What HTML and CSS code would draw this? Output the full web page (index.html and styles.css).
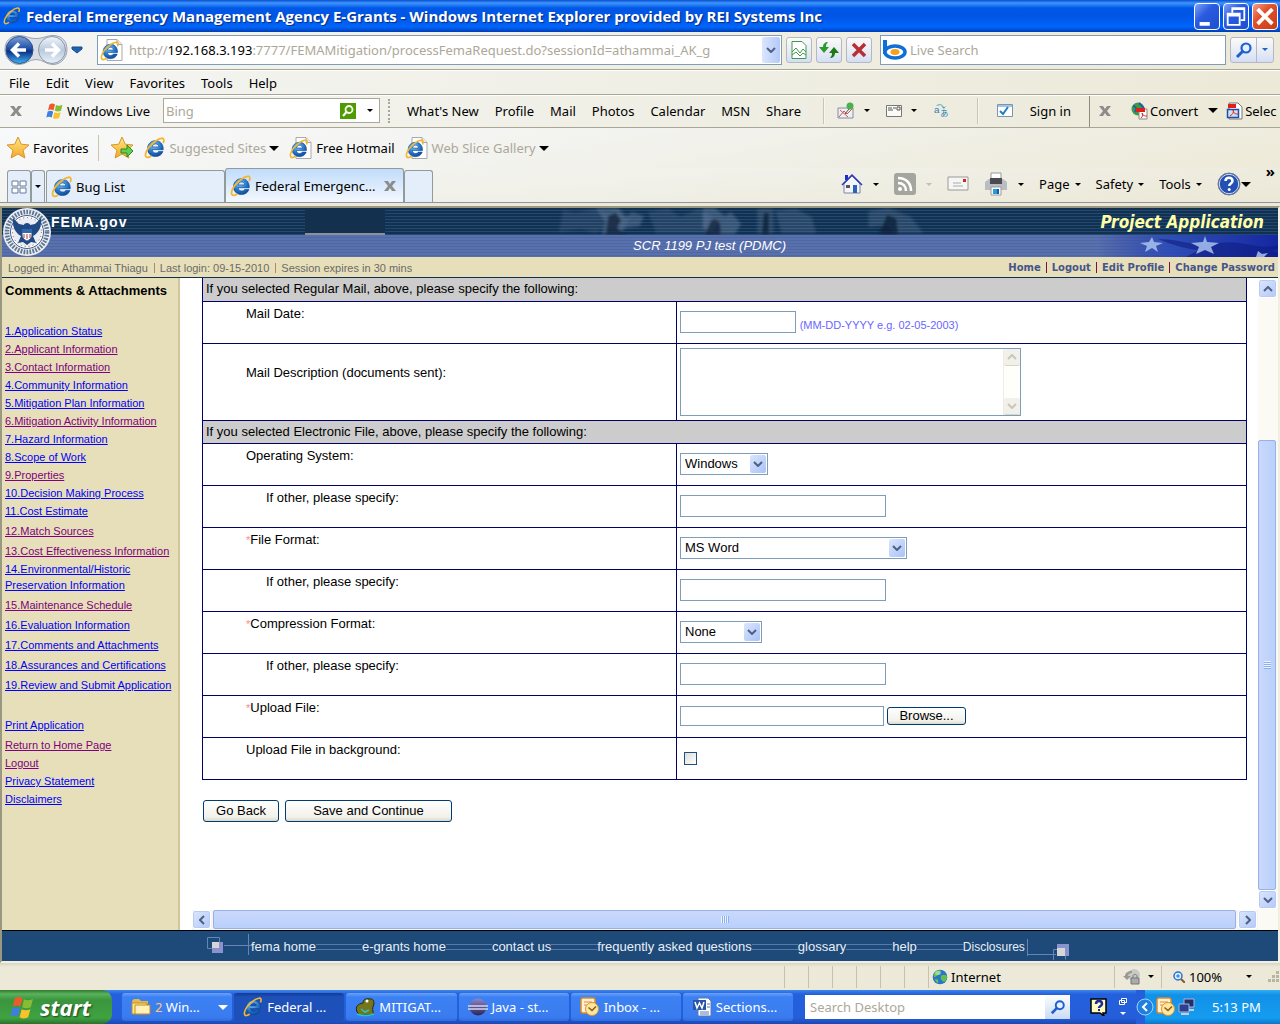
FILE: index.html
```html
<!DOCTYPE html>
<html lang="en">
<head>
<meta charset="utf-8">
<title>Federal Emergency Management Agency E-Grants</title>
<link rel="stylesheet" href="styles.css">
</head>
<body>
<svg class="defs" aria-hidden="true">
  <defs>
    <radialGradient id="gBlue" cx="0.4" cy="0.3" r="0.8"><stop offset="0" stop-color="#7cc8f8"/><stop offset="0.6" stop-color="#1f6fc4"/><stop offset="1" stop-color="#0c3f8c"/></radialGradient>
    <linearGradient id="gBack" x2="0" y2="1"><stop offset="0" stop-color="#7d9ed6"/><stop offset="0.45" stop-color="#1f4fa6"/><stop offset="0.55" stop-color="#0b2f86"/><stop offset="1" stop-color="#3fb4f2"/></linearGradient>
    <linearGradient id="gFwd" x2="0" y2="1"><stop offset="0" stop-color="#f2f6fb"/><stop offset="0.5" stop-color="#b9c9dc"/><stop offset="1" stop-color="#e9f2fa"/></linearGradient>
    <linearGradient id="gStar" x2="0" y2="1"><stop offset="0" stop-color="#ffe98a"/><stop offset="1" stop-color="#f5a623"/></linearGradient>
    <linearGradient id="gPurple" x2="0" y2="1"><stop offset="0" stop-color="#8d86c9"/><stop offset="1" stop-color="#2b2357"/></linearGradient>
    <linearGradient id="gFade"><stop offset="0" stop-color="#1c2fa8" stop-opacity="0"/><stop offset="0.4" stop-color="#2546b8" stop-opacity="0.8"/><stop offset="1" stop-color="#1526a0"/></linearGradient>
    <filter id="soft"><feGaussianBlur stdDeviation="1.500"/></filter>
  </defs>
  <symbol id="ie" viewBox="0 0 20 20">
    <path d="M17.500 11.500H7.400c.2 2 1.500 3 3.200 3 1.300 0 2.200-.5 2.700-1.400h3.900c-1 3-3.500 4.600-6.700 4.600-4.300 0-7.300-2.900-7.300-7.100S6.300 3.300 10.500 3.300c4.500 0 7.200 3.200 7 8.200zM7.500 9h6c-.2-1.700-1.300-2.700-2.900-2.700-1.700 0-2.800 1-3.100 2.700z" fill="url(#gBlue)" stroke="#0d4a94" stroke-width=".6"/>
    <path d="M17.500 5.500C18.700 2.500 18 .8 15.800 1.200 11.500 1.800 4.500 8 2.200 13c-1.500 3.500-.9 6 1.600 5.500 1-.2 2-.8 2.900-1.500" fill="none" stroke="#f2b632" stroke-width="1.600"/>
  </symbol>
  <symbol id="iepage" viewBox="0 0 24 24">
    <path d="M7 1.500h10l5 5v16H7z" fill="#fff" stroke="#a9a9a9"/><path d="M17 1.500v5h5" fill="#eee" stroke="#a9a9a9"/>
    <use href="#ie" x="0" y="3" width="20" height="20"/>
  </symbol>
  <symbol id="caret" viewBox="0 0 8 4"><path d="M0 0h8L4 4z" fill="currentColor"/></symbol>
  <symbol id="cross" viewBox="0 0 12 12"><path d="M0 1h4l2 3 2-3h4L8 6l4 5H8L6 8l-2 3H0l4-5z" fill="#8c8c8c"/></symbol>
  <symbol id="flag" viewBox="0 0 18 18">
    <path d="M3.500 2.500C5.500 1 7 1.200 9 2.400L7.500 8.500C5.500 7.300 4 7.300 2 8.300z" fill="#ee5a2a"/><path d="M10 3c2 1 4 1 6.500-.2L15 8.800c-2.300 1-4 1-6.200 0z" fill="#86bd35"/>
    <path d="M1.700 9.500c2-1 3.600-.9 5.500.2L5.700 15.500C3.700 14.500 2.200 14.500.3 15.400z" fill="#3d7fe0"/><path d="M8.400 10.200c2 1 4 1 6.300 0l-1.600 5.900c-2.200 1-4 1-6.200-.1z" fill="#f8c22c"/>
  </symbol>
  <symbol id="star" viewBox="0 0 24 24"><path d="M12 1l3.200 7.200 7.800.8-5.900 5.200 1.800 7.800L12 18l-6.900 4 1.800-7.800L1 9l7.800-.8z" fill="url(#gStar)" stroke="#d8962a"/></symbol>
  <symbol id="glass" viewBox="0 0 18 18"><circle cx="11" cy="7" r="4.500" fill="#e3f0ff" stroke="currentColor" stroke-width="2.200"/><path d="M8 10l-6 6" stroke="currentColor" stroke-width="3"/></symbol>
  <symbol id="up" viewBox="0 0 10 6"><path d="M1 5l4-4 4 4" fill="none" stroke="currentColor" stroke-width="2"/></symbol>
  <symbol id="down" viewBox="0 0 10 6"><path d="M1 1l4 4 4-4" fill="none" stroke="currentColor" stroke-width="2"/></symbol>
  <symbol id="outlook" viewBox="0 0 20 20"><rect x="1" y="1" width="14" height="15" rx="2" fill="#fff1d8" stroke="#e08a24" stroke-width="1.500"/><path d="M4 5h8M4 8h4" stroke="#e08a24"/><circle cx="12" cy="12" r="6.500" fill="#ffe7a0" stroke="#d9962a"/><path d="M8.500 10.500l3.500 3 4-4" fill="none" stroke="#8a5a12" stroke-width="1.500"/></symbol>
  <symbol id="globe" viewBox="0 0 16 16"><circle cx="8" cy="8" r="7.300" fill="#2a74cc"/><path d="M3 3c2-2 5-2 6-1 0 2-2 2-2 4-2 0-3 2-5 2-.5-2 0-4 1-5zM9 7c2-2 4-1 6 0 0 3-1 5-3 6-2-1-4-3-3-6zM4 10c2 0 3 2 2 4-1 0-3-2-3-4z" fill="#5fc24d"/><ellipse cx="6" cy="4" rx="3" ry="2" fill="#fff" opacity=".4"/></symbol>
</svg>

<header class="titlebar">
  <svg class="i18"><use href="#ie"/></svg>
  <h1>Federal Emergency Management Agency E-Grants - Windows Internet Explorer provided by REI Systems Inc</h1>
  <div class="winbuttons">
    <button class="win" aria-label="Minimize"><svg viewBox="0 0 26 26"><path d="M5 19h11v4H5z" fill="#fff"/></svg></button>
    <button class="win" aria-label="Restore"><svg viewBox="0 0 26 26"><path d="M9 9V4h13v13h-4M9 5h13" fill="none" stroke="#fff" stroke-width="2"/><path d="M4 10h13v12H4zM4 12h13" fill="none" stroke="#fff" stroke-width="2"/></svg></button>
    <button class="win close" aria-label="Close"><svg viewBox="0 0 26 26"><path d="M5 5l16 16M21 5L5 21" stroke="#fff" stroke-width="4"/></svg></button>
  </div>
</header>

<div class="addressrow">
  <svg class="nav" viewBox="0 0 64 32"><path d="M15 1.500c7 0 9 3 17 3s10-3 17-3c9 0 14 6 14 14s-6 15-14 15c-7 0-10-5-17-5s-10 5-17 5c-8 0-14-7-14-15s5-14 14-14z" fill="#d9dee6" stroke="#9aa3b0"/><circle cx="15.500" cy="16" r="13.500" fill="url(#gBack)" stroke="#2b4f8c"/><path d="M9 16h13M15 9.500L8.500 16l6.500 6.500" fill="none" stroke="#fff" stroke-width="3.500"/><circle cx="48" cy="16" r="13.500" fill="url(#gFwd)" stroke="#8b98a8"/><path d="M41 16h13M48 9.500l6.500 6.500-6.500 6.500" fill="none" stroke="#fff" stroke-width="3.500"/></svg>
  <svg class="navcaret" viewBox="0 0 12 8"><path d="M1 1h10v2L6 7 1 3z" fill="#1e62b4" stroke="#1a4a8a"/></svg>
  <div class="address">
    <svg class="i24"><use href="#iepage"/></svg>
    <div class="url" role="textbox" aria-label="Address">http://<b>192.168.3.193</b>:7777/FEMAMitigation/processFemaRequest.do?sessionId=athammai_AK_g</div>
    <button class="drop" aria-label="Show addresses"><svg><use href="#down"/></svg></button>
  </div>
  <div class="navbuttons">
    <button class="sq" aria-label="Compatibility view"><svg viewBox="0 0 18 20"><path d="M2 1.500h10l4 4v13H2z" fill="#fff" stroke="#3c9a4c"/><path d="M2 12l4-4 4 5 3-4 3 3M2 15l4-3 4 4 3-3 3 2" fill="none" stroke="#3c9a4c"/></svg></button>
    <button class="sq" aria-label="Refresh"><svg viewBox="0 0 20 20"><path d="M9 2C6 2 4 4 4 7H0l5 6 5-6H7c0-2 .5-3.500 2-5z" fill="#2c9a2c"/><path d="M11 18c3 0 5-2 5-5h4l-5-6-5 6h3c0 2-.5 3.500-2 5z" fill="#1c7a1c"/></svg></button>
    <button class="sq" aria-label="Stop"><svg viewBox="0 0 20 20"><path d="M4 4l12 12M16 4L4 16" stroke="#b52f34" stroke-width="3.500"/></svg></button>
  </div>
  <div class="search">
    <svg class="bing" viewBox="0 0 24 20"><path d="M2 0v14" stroke="#0f6fd6" stroke-width="4"/><ellipse cx="12" cy="12" rx="10" ry="6" fill="#fff" stroke="#0f6fd6" stroke-width="3.500"/><ellipse cx="12" cy="12" rx="4.500" ry="3" fill="#f9a11b"/></svg>
    <input type="text" placeholder="Live Search" aria-label="Live Search">
  </div>
  <div class="searchgo"><button aria-label="Search"><svg class="i18 blue"><use href="#glass"/></svg></button><button class="more" aria-label="Search options"><svg class="caret blue"><use href="#caret"/></svg></button></div>
</div>

<nav class="menubar"><a href="#">File</a><a href="#">Edit</a><a href="#">View</a><a href="#">Favorites</a><a href="#">Tools</a><a href="#">Help</a></nav>

<div class="livebar">
  <button class="plain closebar" aria-label="Close toolbar"><svg class="i12"><use href="#cross"/></svg></button>
  <a class="live" href="#"><svg class="i18"><use href="#flag"/></svg>Windows Live</a>
  <div class="bingbox"><input type="text" placeholder="Bing" aria-label="Bing"><svg class="i16" viewBox="0 0 16 16"><path d="M0 0h16v16H0z" fill="#4f9c00"/><circle cx="9" cy="6.500" r="3.500" fill="none" stroke="#fff" stroke-width="1.800"/><path d="M6.500 9L3 13" stroke="#fff" stroke-width="2"/></svg><svg class="caret"><use href="#caret"/></svg></div>
  <span class="grip"></span>
  <nav class="livelinks"><a href="#">What's New</a><a href="#">Profile</a><a href="#">Mail</a><a href="#">Photos</a><a href="#">Calendar</a><a href="#">MSN</a><a href="#">Share</a></nav>
  <span class="vsep"></span>
  <div class="liveicons">
    <span class="duo"><svg class="i18" viewBox="0 0 18 18"><path d="M1 6h15v10H1z" fill="#e9f1f2" stroke="#88a"/><path d="M2 15l5-6 3 3 5-5M3 8l8 7" fill="none" stroke="#d9534a"/><circle cx="13" cy="4" r="3.500" fill="#4cb04c"/><path d="M12 7l-4 5" stroke="#555"/></svg><svg class="caret"><use href="#caret"/></svg></span>
    <span class="duo"><svg class="i16" viewBox="0 0 16 16"><path d="M.5 2.500h15v11H.5z" fill="#fbfbf6" stroke="#777"/><path d="M2 5h4M7 5h3M2 7h5M11 4h3v3h-3z" fill="none" stroke="#555"/></svg><svg class="caret"><use href="#caret"/></svg></span>
    <svg class="i18" viewBox="0 0 20 20"><text x="1" y="12" class="tiny">a</text><text x="8" y="16" class="tiny jp">あ</text><path d="M4 4c4-2 7-1 8 3M10 5l2 2 2-2" fill="none" stroke="#3a9fc6"/></svg>
  </div>
  <span class="vsep"></span>
  <a class="signin" href="#"><svg class="i16" viewBox="0 0 16 16"><path d="M.5 1.500h15v12H.5z" fill="#fff" stroke="#7795b5"/><path d="M1 3h14" stroke="#a9c3dd" stroke-width="2"/><path d="M3 8l3 3 5-7" fill="none" stroke="#1f7fc4" stroke-width="2"/></svg>Sign in</a>
  <div class="pdfbar">
    <button class="plain" aria-label="Close PDF toolbar"><svg class="i12"><use href="#cross"/></svg></button>
    <a class="convert" href="#"><svg class="i18" viewBox="0 0 18 18"><circle cx="7" cy="7" r="6.500" fill="#3f9a46"/><path d="M2 4c3 0 4 3 2 6M8 1c2 2 4 3 5 6" stroke="#245ca8" stroke-width="2" fill="none"/><path d="M8 7h8v10H8z" fill="#fff" stroke="#888"/><path d="M5 6h9v4H5z" fill="#e0201b"/><path d="M10 16c2-2 2-4 1-5 1 3 3 3 5 3" fill="none" stroke="#e0201b"/></svg>Convert</a>
    <svg class="bigcaret"><use href="#caret"/></svg>
    <a class="convert selec" href="#"><svg class="i18" viewBox="0 0 18 18"><path d="M3 1h9l4 4v12H3z" fill="#fff" stroke="#777"/><path d="M2 2h8v4H2z" fill="#e0201b"/><path d="M1.500 7.500h11v8h-11z" fill="#cfe0f5" stroke="#1f4fa6" stroke-width="1.500"/><path d="M4 14c3-2 4-4 3-6 1 4 2 4 5 4" fill="none" stroke="#e0201b"/></svg>Selec</a>
  </div>
</div>

<nav class="favbar">
  <a href="#"><svg class="i24"><use href="#star"/></svg>Favorites</a>
  <span class="vsep"></span>
  <a href="#" aria-label="Add to Favorites Bar"><svg class="i24" viewBox="0 0 24 24"><use href="#star"/><path d="M11 13h6v-4l6 6-6 6v-4h-6z" fill="#5fcf4e" stroke="#2a8a24"/></svg></a>
  <a class="dim" href="#"><svg class="i22"><use href="#ie"/></svg>Suggested Sites<svg class="bigcaret"><use href="#caret"/></svg></a>
  <a href="#"><svg class="i24"><use href="#iepage"/></svg>Free Hotmail</a>
  <a class="dim" href="#"><svg class="i24"><use href="#iepage"/></svg>Web Slice Gallery<svg class="bigcaret"><use href="#caret"/></svg></a>
</nav>

<div class="tabrow">
  <button class="quick" aria-label="Quick Tabs"><svg class="i16" viewBox="0 0 16 16"><path d="M1 2h6v5H1zM9 2h6v5H9zM1 9h6v5H1zM9 9h6v5H9z" fill="#fff" stroke="#6b7a99"/></svg></button>
  <button class="quick slim" aria-label="Tab list"><svg class="caret"><use href="#caret"/></svg></button>
  <a class="tab" href="#"><svg class="i22"><use href="#ie"/></svg>Bug List</a>
  <a class="tab active" href="#"><svg class="i22"><use href="#ie"/></svg><span>Federal Emergenc...</span><svg class="i12"><use href="#cross"/></svg></a>
  <button class="newtab" aria-label="New Tab"></button>
  <div class="commands">
    <span class="duo"><svg class="i22" viewBox="0 0 22 22"><path d="M4 2h3v5H4z" fill="#1b2fc0"/><path d="M3 11l8-8 8 8v9H3z" fill="#f3f5fa" stroke="#7a86a8"/><path d="M1 12L11 2l10 10" fill="none" stroke="#2738c0" stroke-width="1.500"/><path d="M5 12h4v3H5z" fill="#555"/><path d="M12 12h4v8h-4z" fill="#2c63b8"/></svg><svg class="caret"><use href="#caret"/></svg></span>
    <span class="duo"><svg class="i22" viewBox="0 0 22 22"><rect width="22" height="22" rx="3" fill="#a5a5a0"/><circle cx="6" cy="16" r="2" fill="#fff"/><path d="M4 10c5 0 8 3 8 8M4 5c8 0 13 5 13 13" fill="none" stroke="#fff" stroke-width="2.500"/></svg><svg class="caret faint"><use href="#caret"/></svg></span>
    <svg class="i22" viewBox="0 0 22 22"><path d="M1 4h20v13H1z" fill="#f6f6f4" stroke="#999"/><path d="M16 6h3v3h-3z" fill="#e0201b"/><path d="M6 10h8M6 13h10" stroke="#aaa"/></svg>
    <span class="duo"><svg class="i24" viewBox="0 0 24 24"><path d="M7 1h10v8H7z" fill="#fff" stroke="#999"/><path d="M1 10l4-3h14l4 3v8H1z" fill="#b9bcc2"/><path d="M6 6h12v6H6z" fill="#4a4c52"/><path d="M7 15h10v8H7z" fill="#fff" stroke="#999"/><path d="M9 17h4v5H9z" fill="#1fa0d8"/><path d="M13 17h2v5h-2z" fill="#2455b0"/></svg><svg class="caret"><use href="#caret"/></svg></span>
    <a href="#">Page<svg class="caret"><use href="#caret"/></svg></a>
    <a href="#">Safety<svg class="caret"><use href="#caret"/></svg></a>
    <a href="#">Tools<svg class="caret"><use href="#caret"/></svg></a>
    <span class="help"><svg class="i24" viewBox="0 0 24 24"><circle cx="12" cy="12" r="11" fill="#2350b4" stroke="#777c8c"/><circle cx="12" cy="12" r="9.700" fill="none" stroke="#d4def2"/><path d="M8.500 9c0-4.500 7-4.500 7 0 0 2.500-3.300 2.500-3.300 5" fill="none" stroke="#fff" stroke-width="2.500"/><circle cx="12.200" cy="17.500" r="1.500" fill="#fff"/></svg><svg class="bigcaret"><use href="#caret"/></svg></span>
    <span class="chev">»</span>
  </div>
</div>

<div class="viewport">
  <div class="banner">
    <svg class="seal" viewBox="0 0 50 50"><circle cx="25" cy="25" r="24" fill="#e9ecf0"/><circle cx="25" cy="25" r="20" fill="none" stroke="#5d7694" stroke-width="4.500" stroke-dasharray="1.700 1.300"/><circle cx="25" cy="25" r="16.500" fill="#fff" stroke="#39628f" stroke-width="1"/><circle cx="25" cy="25" r="14.500" fill="#e9eef4" stroke="#c03a3a" stroke-dasharray="1 3"/><path d="M25 16c2 0 3 1 3 2l5-1 6-6c1 8-2 15-8 18l3 7-5-1-4 3-4-3-5 1 3-7c-6-3-9-10-8-18l6 6 5 1c0-1 1-2 3-2z" fill="#1f4a85"/><path d="M20 22h10v6c0 4-5 6-5 6s-5-2-5-6z" fill="#fff" stroke="#1f4a85"/><path d="M22 27v4M25 27v5M28 27v4" stroke="#b33"/><path d="M20 22h10v4H20z" fill="#2f68ac"/></svg>
    <div class="dark">
      <strong class="fema">FEMA.gov</strong>
      <span class="slot"></span>
      <svg class="photo" viewBox="0 0 480 27" preserveAspectRatio="none"><g filter="url(#soft)"><g fill="#8ba3bf"><path opacity=".14" d="M8 2l12 3 18-4 14 5 12-5 10 8-6 12-18-2-10 6-14-4-22 3z"/><path opacity=".3" d="M40 0h22l8 10 6-6 12 4-4 10-14 2-8 6H46l4-12z"/><path opacity=".16" d="M92 4l20-3 12 8 18-8 20 12-8 12h-54z"/><path opacity=".32" d="M146 0h12l10 8 6-4 10 12-6 10h-22l-10-6z"/><path opacity=".2" d="M200 1h16v24h-16zM218 3l20-2 16 8 4 16h-34z"/><path opacity=".2" d="M310 3l20-3 22 9 12 16h-28l-8-8-18 2z"/></g><g fill="#0b1e36" opacity=".7"><path d="M52 8l8-4 6 8-4 8 8 6H50zM154 12c6-4 12 2 10 14h-16zM206 4h6v22h-8zM328 6l10 4 2 16h-20z"/></g></g></svg>
      <span class="app">Project Application</span>
    </div>
    <div class="light"><span>SCR 1199 PJ test (PDMC)</span>
      <svg class="stars" viewBox="0 0 180 22" preserveAspectRatio="none"><path d="M0 0h180v22H0z" fill="url(#gFade)"/><path d="M88 22c20-12 50-20 92-4v4zM60 4c22 0 34 8 60 4s40 8 60 2v4c-20 6-40-4-60 0S80 12 60 4z" fill="#0d1a80" opacity=".55"/><path d="M107 1l2 6 12 1-8 4 3 7-9-4-9 4 3-7-8-4 12-1zM54 2l2 5 9 1-7 3 2 6-6-4-7 4 2-6-7-3 9-1zM160 16l4 3 6-1-4 4h-8z" fill="#a9c2f0" opacity=".85"/></svg>
    </div>
  </div>
  <div class="session">
    <div class="info"><span>Logged in: Athammai Thiagu</span><span>Last login: 09-15-2010</span><span>Session expires in 30 mins</span></div>
    <nav class="links"><a href="#">Home</a><a href="#">Logout</a><a href="#">Edit Profile</a><a href="#">Change Password</a></nav>
  </div>

  <div class="main">
    <aside class="side">
      <h2>Comments &amp; Attachments</h2>
      <ul>
        <li><a href="#">1.Application Status</a></li>
        <li><a class="seen" href="#">2.Applicant Information</a></li>
        <li><a class="seen" href="#">3.Contact Information</a></li>
        <li><a href="#">4.Community Information</a></li>
        <li><a href="#">5.Mitigation Plan Information</a></li>
        <li><a class="seen" href="#">6.Mitigation Activity Information</a></li>
        <li><a href="#">7.Hazard Information</a></li>
        <li><a href="#">8.Scope of Work</a></li>
        <li><a class="seen" href="#">9.Properties</a></li>
        <li><a href="#">10.Decision Making Process</a></li>
        <li class="loose"><a href="#">11.Cost Estimate</a></li>
        <li class="loose"><a class="seen" href="#">12.Match Sources</a></li>
        <li><a class="seen" href="#">13.Cost Effectiveness Information</a></li>
        <li class="loose"><a href="#">14.Environmental/Historic Preservation Information</a></li>
        <li class="loose"><a class="seen" href="#">15.Maintenance Schedule</a></li>
        <li class="loose"><a href="#">16.Evaluation Information</a></li>
        <li class="loose"><a href="#">17.Comments and Attachments</a></li>
        <li class="loose"><a href="#">18.Assurances and Certifications</a></li>
        <li class="loose"><a href="#">19.Review and Submit Application</a></li>
      </ul>
      <ul>
        <li class="loose"><a href="#">Print Application</a></li>
        <li><a class="seen" href="#">Return to Home Page</a></li>
        <li><a class="seen" href="#">Logout</a></li>
        <li><a href="#">Privacy Statement</a></li>
        <li><a href="#">Disclaimers</a></li>
      </ul>
    </aside>
    <div class="frame">
      <form class="content" action="#">
        <table>
          <colgroup><col class="c1"><col></colgroup>
          <tr><th colspan="2">If you selected Regular Mail, above, please specify the following:</th></tr>
          <tr><td><label for="date">Mail Date:</label></td><td><input id="date" class="text short" type="text"> <small>(MM-DD-YYYY e.g. 02-05-2003)</small></td></tr>
          <tr class="tall"><td><label for="desc">Mail Description (documents sent):</label></td><td><div class="area"><textarea id="desc"></textarea><div class="areabar"><span><svg><use href="#up"/></svg></span><span><svg><use href="#down"/></svg></span></div></div></td></tr>
          <tr><th colspan="2">If you selected Electronic File, above, please specify the following:</th></tr>
          <tr><td><label for="os">Operating System:</label></td><td><span class="pick os"><select id="os"><option>Windows</option></select><svg><use href="#down"/></svg></span></td></tr>
          <tr><td class="sub"><label for="os2">If other, please specify:</label></td><td><input id="os2" class="text" type="text"></td></tr>
          <tr><td><i>*</i><label for="ff">File Format:</label></td><td><span class="pick ff"><select id="ff"><option>MS Word</option></select><svg><use href="#down"/></svg></span></td></tr>
          <tr><td class="sub"><label for="ff2">If other, please specify:</label></td><td><input id="ff2" class="text" type="text"></td></tr>
          <tr><td><i>*</i><label for="cf">Compression Format:</label></td><td><span class="pick cf"><select id="cf"><option>None</option></select><svg><use href="#down"/></svg></span></td></tr>
          <tr><td class="sub"><label for="cf2">If other, please specify:</label></td><td><input id="cf2" class="text" type="text"></td></tr>
          <tr><td><i>*</i><label for="file">Upload File:</label></td><td><div class="upload"><input id="file" class="text" type="text"><button type="button" class="btn small">Browse...</button></div></td></tr>
          <tr><td><label for="bg">Upload File in background:</label></td><td><input id="bg" type="checkbox"></td></tr>
        </table>
        <div class="actions"><button type="button" class="btn">Go Back</button><button type="button" class="btn wide">Save and Continue</button></div>
      </form>
      <div class="hbar"><span class="sb"><svg viewBox="0 0 6 10"><path d="M5 1L1 5l4 4" fill="none" stroke="currentColor" stroke-width="2"/></svg></span><span class="thumb"></span><span class="sb"><svg viewBox="0 0 6 10"><path d="M1 1l4 4-4 4" fill="none" stroke="currentColor" stroke-width="2"/></svg></span></div>
    </div>
    <div class="vbar"><span class="sb"><svg><use href="#up"/></svg></span><span class="track"></span><span class="thumb"></span><span class="sb"><svg><use href="#down"/></svg></span></div>
  </div>

  <footer class="foot">
    <svg class="endl" viewBox="0 0 46 26"><g fill="none" stroke="#6685b4"><path d="M.5 3.500h12v11H.5zM17 11.500h29M41.500 0v21"/></g><path d="M5 8h11v11H5z" fill="#8b93cf"/><path d="M5 8h7v6H5z" fill="#d6d6d6"/></svg>
    <a href="#">fema home</a><span class="wire"></span>
    <a href="#">e-grants home</a><span class="wire"></span>
    <a href="#">contact us</a><span class="wire"></span>
    <a href="#">frequently asked questions</a><span class="wire"></span>
    <a href="#">glossary</a><span class="wire"></span>
    <a href="#">help</a><span class="wire"></span>
    <a class="narrow" href="#">Disclosures</a>
    <svg class="endr" viewBox="0 0 46 26"><g fill="none" stroke="#6685b4"><path d="M2.500 5v17M3 20.500h28M28.500 26V15.500h12v10"/></g><path d="M32 10h12v12H32z" fill="#8b93cf"/><path d="M32 14h8v8h-8z" fill="#d6d6d6"/></svg>
  </footer>
</div>

<div class="status">
  <span class="cell"></span><span class="cell"></span><span class="cell"></span><span class="cell"></span><span class="cell"></span><span class="cell"></span>
  <span class="zone"><svg class="i16"><use href="#globe"/></svg>Internet</span>
  <span class="lock"><svg class="i18" viewBox="0 0 18 18"><circle cx="11" cy="7" r="6" fill="#c9c9c4"/><path d="M9 3c-4 0-7 2-7 5H0l4 4 4-4H5c0-2 2-3 4-3z" fill="#999"/><path d="M8 10h8v6H8z" fill="#aaa" stroke="#777"/><path d="M10 10V8c0-2 4-2 4 0v2" fill="none" stroke="#777"/></svg><svg class="caret"><use href="#caret"/></svg></span>
  <span class="zoom"><svg class="i12" viewBox="0 0 12 12"><circle cx="5" cy="5" r="4" fill="#dff0ff" stroke="#2b6fd0" stroke-width="1.500"/><path d="M3 5h4M5 3v4" stroke="#2b6fd0"/><path d="M8 8l4 4" stroke="#8a5a2a" stroke-width="2"/></svg><span>100%</span><svg class="caret"><use href="#caret"/></svg></span>
  <svg class="i12" viewBox="0 0 12 12"><path d="M8 0h3v3H8zM4 4h3v3H4zM8 4h3v3H8zM0 8h3v3H0zM4 8h3v3H4zM8 8h3v3H8z" fill="#b9b5a2"/></svg>
</div>

<div class="taskbar">
  <button class="start"><svg viewBox="0 0 18 18"><use href="#flag"/></svg>start</button>
  <div class="tasks">
    <button class="task"><svg class="i20" viewBox="0 0 20 20"><path d="M1 4l2-2h5l2 2h7v3H1z" fill="#e5b94a"/><path d="M1 6h15v11H1z" fill="#ffe79a" stroke="#c08a20"/><path d="M4 8h15v9H4z" fill="#fff2b8" stroke="#c08a20"/></svg><span><em>2</em> Win...</span><svg class="bigcaret"><use href="#caret"/></svg></button>
    <button class="task on"><svg class="i20"><use href="#ie"/></svg><span>Federal ...</span></button>
    <button class="task"><svg class="i20" viewBox="0 0 20 20"><path d="M2 15C0 9 3 7 8 6c0-4 4-5 6-4 4-1 5 2 5 5-1 3-2 4-1 8 1 2-1 3-3 3H5z" fill="#75751a" stroke="#222a08"/><circle cx="12" cy="4" r="1.500" fill="#fff"/><path d="M2 17c5 2 11 2 17 0M6 12l4 3 4-2" fill="none" stroke="#2ac4c4" stroke-width="1.500"/></svg><span>MITIGAT...</span></button>
    <button class="task"><svg class="i20" viewBox="0 0 20 20"><circle cx="10" cy="10" r="8.500" fill="url(#gPurple)"/><path d="M0 9h20M0 12h20" stroke="#d9d6f0" stroke-width="1.300"/></svg><span>Java - st...</span></button>
    <button class="task"><svg class="i20"><use href="#outlook"/></svg><span>Inbox - ...</span></button>
    <button class="task"><svg class="i20" viewBox="0 0 20 20"><path d="M6 1h10l3 3v15H6z" fill="#fff" stroke="#5a78b0"/><path d="M8 15h9M8 17h9M15 7h3M15 10h3" stroke="#5a78b0"/><path d="M1 3h13v10H1z" fill="#2a54a8"/><path d="M3 5l2 6 2.500-5L10 11l2-6" fill="none" stroke="#fff" stroke-width="1.500"/></svg><span>Sections...</span></button>
  </div>
  <div class="desk"><input type="text" placeholder="Search Desktop" aria-label="Search Desktop"><button aria-label="Search"><svg class="i16 blue"><use href="#glass"/></svg></button></div>
  <svg class="i18 q" viewBox="0 0 18 18"><path d="M1 1h15v14h-3l1 3-4-3H1z" fill="#fffbc0" stroke="#000" stroke-width="1.500"/><path d="M6 6c0-4 6-4 6 0 0 2-3 2-3 4" fill="none" stroke="#1a2a9a" stroke-width="2.500"/><path d="M8 11h2v2H8z" fill="#1a2a9a"/></svg>
  <svg class="lang" viewBox="0 0 10 20"><path d="M3.500 1.500h5v4h-5zM1.500 3.500h5v4h-5z" fill="#1c50c8" stroke="#fff"/><path d="M2 15h6l-3 3z" fill="#fff"/></svg>
  <div class="tray">
    <svg class="i18" viewBox="0 0 18 18"><circle cx="9" cy="9" r="8" fill="#1f7fe0" stroke="#9fd4ff"/><path d="M11 5L7 9l4 4" fill="none" stroke="#fff" stroke-width="2"/></svg>
    <svg class="i20"><use href="#outlook"/></svg>
    <svg class="i18" viewBox="0 0 18 18"><path d="M6 1h10v8H6z" fill="#22306a" stroke="#aab6d8"/><path d="M1 6h10v8H1z" fill="#2e4190" stroke="#aab6d8"/><path d="M3 16h8M11 12h5" stroke="#c5cbe0" stroke-width="2"/></svg>
    <time>5:13 PM</time>
  </div>
</div>
</body>
</html>
```
FILE: styles.css
```css
* { box-sizing: border-box; }
body { margin: 0; min-height: 100vh; display: flex; flex-direction: column; font: 13px/18px "Noto Sans", "Open Sans", sans-serif; color: #000; background: #ece9d8; }
a { color: inherit; text-decoration: none; white-space: nowrap; }
button, input, select, textarea { font: inherit; color: inherit; margin: 0; padding: 0; }
input::placeholder { color: #aca899; opacity: 1; }
svg { display: block; flex: none; }
.defs { position: absolute; width: 0; height: 0; }
.i12 { width: 12px; height: 12px; }
.i16 { width: 16px; height: 16px; }
.i18 { width: 18px; height: 18px; }
.i20 { width: 20px; height: 20px; }
.i22 { width: 22px; height: 22px; }
.i24 { width: 24px; height: 24px; }
.caret { width: 6px; height: 3px; }
.bigcaret { width: 10px; height: 5px; color: #000; }
.faint { color: #c4c0b0; }
.blue { color: #1f5fd0; }
.plain { border: 0; background: none; }
.vsep { width: 2px; height: 26px; background: #c9c5b2; border-right: 1px solid #f7f5ee; }
.duo { display: flex; align-items: center; gap: 10px; }

.titlebar { height: 32px; display: flex; align-items: center; gap: 5px; padding: 0 2px 0 3px; color: #fff; background: linear-gradient(#0a4ed0, #3d95ff 3px, #0058e6 8px, #0055e5 16px, #0066fb 27px, #0044c4 31px, #003dac); }
.titlebar h1 { flex: 1; margin: 0; font: 700 15px/20px "Open Sans", sans-serif; white-space: nowrap; overflow: hidden; text-shadow: 1px 1px 1px #0a2a80; }
.winbuttons { display: flex; gap: 3px; }
.win { width: 26px; height: 27px; border: 1px solid #fff; border-radius: 4px; background: linear-gradient(135deg, #7ea2f5, #2a5be0 40%, #1d4fd0); }
.win svg { width: 24px; height: 25px; }
.win.close { background: linear-gradient(135deg, #f0a088, #e0512c 40%, #c83c14); }

.addressrow, .menubar, .livebar { background: linear-gradient(90deg, #f4f5f3, #ece9d8); }
.addressrow { height: 38px; display: flex; align-items: center; padding: 0 6px 2px 4px; border-bottom: 1px solid #a9a695; }
.nav { width: 64px; height: 32px; }
.navcaret { width: 12px; height: 8px; margin: 0 14px 0 3px; }
.address { flex: 690; min-width: 0; height: 30px; display: flex; align-items: center; background: #fff; border: 1px solid #7f9db9; padding: 1px 1px 1px 2px; }
.url { flex: 1; margin-left: 5px; color: #aca899; white-space: nowrap; overflow: hidden; }
.url b { font-weight: 400; color: #000; }
.drop { width: 18px; height: 26px; border: 0; border-radius: 2px; color: #4d6185; background: linear-gradient(90deg, #dbe6fe, #b4c9f8); display: grid; place-items: center; }
.drop svg, .pick svg, .areabar svg, .vbar svg { width: 10px; height: 6px; }
.navbuttons { display: flex; gap: 4px; margin: 0 8px 0 4px; }
.sq, .searchgo { height: 26px; border: 1px solid #b5b8c2; border-radius: 3px; background: linear-gradient(#fafafa, #e6eaf4 60%, #d3def5); }
.sq { width: 26px; display: grid; place-items: center; }
.sq svg { width: 20px; height: 20px; }
.search { flex: 347; height: 30px; display: flex; align-items: center; background: #fff; border: 1px solid #7f9db9; padding-left: 2px; }
.search input { flex: 1; min-width: 0; border: 0; margin-left: 3px; outline: 0; background: none; }
.bing { width: 24px; height: 20px; }
.searchgo { display: flex; margin-left: 4px; }
.searchgo button { width: 25px; border: 0; background: none; display: grid; place-items: center; }
.searchgo .more { width: 17px; border-left: 1px solid #b5b8c2; }

.menubar { height: 25px; display: flex; align-items: center; gap: 16px; padding: 0 9px; border-top: 1px solid #fff; border-bottom: 1px solid #a9a695; }
.livebar { height: 33px; display: flex; align-items: center; padding-bottom: 2px; border-top: 1px solid #fff; border-bottom: 1px solid #a9a695; overflow: hidden; }
.closebar { margin: 0 24px 0 10px; }
.live { display: flex; align-items: center; gap: 3px; width: 117px; }
.bingbox { width: 217px; height: 25px; display: flex; align-items: center; gap: 11px; padding: 0 6px 0 2px; background: #fff; border: 1px solid #aca899; }
.bingbox input { flex: 1; min-width: 0; border: 0; outline: 0; }
.grip { height: 24px; border-left: 2px dotted #a9a695; margin: 0 17px 0 8px; }
.livelinks { display: flex; gap: 16px; flex: 1; }
.liveicons { display: flex; align-items: center; gap: 16px; margin: 0 26px 0 12px; }
.liveicons .duo { gap: 9px; }
.tiny { font: 11px "Liberation Sans", sans-serif; fill: #2c7fb4; }
.jp { font: 9px "Noto Sans CJK JP", sans-serif; }
.signin { display: flex; align-items: center; gap: 17px; margin: 0 18px; }
.pdfbar { height: 32px; display: flex; align-items: center; border-left: 1px solid #8f8c80; padding-left: 9px; width: 191px; overflow: hidden; }
.convert { display: flex; align-items: center; gap: 1px; margin: 0 10px 0 20px; }
.selec { margin: 0 0 0 8px; }

.favbar { height: 40px; display: flex; align-items: center; gap: 10px; padding: 0 6px; background: linear-gradient(170deg, #f8f9fa, #f3f3f0 40%, #edead8); }
.favbar a { display: flex; align-items: center; gap: 3px; }
.dim { color: #aca899; }

.tabrow { height: 35px; display: flex; align-items: flex-end; padding: 0 5px 0 7px; background: linear-gradient(175deg, #f5f6f6, #f1f0e8 50%, #ebe8d6); border-bottom: 1px solid #8d93a5; }
.quick, .tab, .newtab { height: 32px; border: 1px solid #919b9c; border-bottom: 0; border-radius: 3px 3px 0 0; background: #e3eefa; }
.quick { width: 24px; display: grid; place-items: center; }
.slim { width: 14px; }
.tab { width: 179px; display: flex; align-items: center; gap: 3px; padding: 0 4px; margin-left: 1px; }
.tab.active { height: 34px; background: linear-gradient(#c1dcfb, #f4f8fd); margin: 0; }
.tab.active span { flex: 1; }
.tab.active .i12 { margin-right: 3px; }
.newtab { width: 29px; }
.commands { margin-left: auto; height: 36px; display: flex; align-items: center; gap: 15px; }
.commands a { display: flex; align-items: center; gap: 5px; }
.help { display: flex; align-items: center; }
.chev { align-self: flex-start; font-size: 15px; line-height: 10px; font-weight: 700; }

.viewport { flex: 1; display: flex; flex-direction: column; margin-top: 3px; border: 2px solid #9b9882; border-right-color: #f1efe2; border-bottom-color: #f1efe2; font-family: "Liberation Sans", Arial, sans-serif; background: #fff; }
.banner { position: relative; }
.seal { position: absolute; left: 0; top: -1px; width: 50px; height: 50px; }
.dark { height: 27px; display: flex; align-items: center; padding: 0 14px 0 49px; color: #fff; background: repeating-linear-gradient(transparent 0 2px, rgba(45, 105, 160, .45) 2px 3px), #14304f; }
.fema { font-size: 14px; letter-spacing: 1px; width: 254px; }
.slot { width: 80px; height: 27px; background: #14304f; border-bottom: 2px solid #8d9096; }
.photo { flex: 1; height: 27px; min-width: 0; margin: 0 60px 0 170px; }
.app { font: italic 700 17px/24px "DejaVu Sans Condensed", "DejaVu Sans", sans-serif; color: #ffffa8; white-space: nowrap; }
.light { height: 22px; display: flex; align-items: center; justify-content: flex-end; font: italic 13px/22px "Liberation Sans", Arial, sans-serif; color: #fff; background: repeating-linear-gradient(#5870ac 0 2px, #4f67a4 2px 3px); }
.light span { margin-right: 312px; }
.light .stars { width: 180px; height: 22px; }
.session { height: 21px; display: flex; justify-content: space-between; align-items: center; padding: 2px 3px 0 6px; background: #e7dfb9; border-bottom: 1px solid #14304f; font-size: 11px; line-height: 16px; color: #6a6a6a; }
.info span + span { margin-left: 6px; padding-left: 6px; background: linear-gradient(#b08a68, #b08a68) left center / 1px 10px no-repeat; }
.links { font: 700 10px/12px "DejaVu Sans", sans-serif; color: #45558c; }
.links a + a { margin-left: 5px; padding-left: 5px; border-left: 1px solid #7a1040; }

.main { flex: 1; display: flex; }
.side { width: 178px; padding: 4px 3px 20px; background: #e7dfb9; border-right: 2px solid #cfc69c; font-size: 11px; line-height: 16px; }
.side h2 { margin: 0 0 23px; font-size: 13px; line-height: 18px; white-space: nowrap; }
.side ul { list-style: none; margin: 0 0 24px; padding: 0; }
.side li { margin-bottom: 2px; }
.side .loose { margin-bottom: 4px; }
.side a { color: #00f; text-decoration: underline; white-space: normal; }
.side .seen { color: #800080; }
.frame { flex: 1; min-width: 0; display: flex; flex-direction: column; justify-content: space-between; }
.content { padding: 0 11px 0 22px; }
table { width: 100%; table-layout: fixed; border-collapse: collapse; font-size: 13px; line-height: 16px; }
.c1 { width: 474px; }
th, td { border: 1px solid #000066; }
tr:first-child th { border-top: 0; }
th { height: 23px; padding: 0 3px; background: #ccc; font-weight: 400; text-align: left; }
td { height: 42px; padding: 0 3px; }
td:first-child { vertical-align: top; padding: 4px 0 0 43px; }
td.sub:first-child { padding-left: 63px; }
.tall td { height: 77px; }
.tall td:first-child { padding-top: 21px; }
td i { font-style: normal; color: #f88; font-size: 11px; }
.text { width: 206px; height: 22px; border: 1px solid #7f9db9; background: #fff; vertical-align: middle; }
.short { width: 116px; }
small { font-size: 11px; color: #6a66ff; vertical-align: -4px; }
.area { width: 341px; height: 68px; display: flex; border: 1px solid #7f9db9; }
.area textarea { flex: 1; border: 0; resize: none; outline: 0; }
.areabar { width: 17px; display: flex; flex-direction: column; justify-content: space-between; background: #fefefb; border-left: 1px solid #eeede5; }
.areabar span { height: 17px; display: grid; place-items: center; color: #c9c7ba; background: #f1f0ea; border-bottom: 1px solid #d8d6c8; border-radius: 2px; }
.pick { display: grid; width: 88px; height: 22px; align-items: center; border: 1px solid #7f9db9; background: #fff; }
.pick select { grid-area: 1 / 1; appearance: none; border: 0; background: none; height: 20px; padding-left: 4px; }
.pick svg { grid-area: 1 / 1; justify-self: end; margin-right: 1px; width: 16px; height: 18px; padding: 6px 3px; color: #4d6185; background: linear-gradient(135deg, #dbe6fe, #a9c2f7); border-radius: 2px; pointer-events: none; }
.pick.ff { width: 227px; }
.pick.cf { width: 82px; }
.upload { display: flex; align-items: center; gap: 3px; }
.upload .text { width: 204px; height: 20px; }
.btn { height: 22px; width: 76px; border: 1px solid #003c74; border-radius: 3px; background: linear-gradient(#fff, #f2f1ea 80%, #dcd8cc); font-size: 13px; line-height: 16px; }
.btn.small { width: 79px; height: 18px; }
.btn.wide { width: 167px; }
input[type="checkbox"] { display: block; appearance: none; width: 13px; height: 13px; margin-left: 4px; border: 1px solid #1c5180; background: linear-gradient(135deg, #dcdcd7, #fff); }
.actions { display: flex; gap: 6px; padding: 20px 0 0 1px; }
.sb { width: 19px; height: 19px; display: grid; place-items: center; color: #4d6185; background: linear-gradient(135deg, #dbe6fe, #b4c9f8); border: 1px solid #fff; border-radius: 3px; box-shadow: inset 0 0 0 1px #b8cbf6; flex: none; }
.hbar { height: 20px; display: flex; gap: 2px; padding-right: 1px; margin-left: 12px; background: #f6f5ef; }
.hbar svg { width: 6px; height: 10px; }
.thumb { display: grid; border: 1px solid #98b1e4; border-radius: 2px; background: repeating-linear-gradient(90deg, #eef4fe 0 1px, #8cb0f8 1px 2px) center / 8px 7px no-repeat, linear-gradient(#cad8fc, #b9d0fb); }
.hbar .thumb { flex: 1; height: 19px; }
.vbar { width: 20px; display: flex; flex-direction: column; padding: 1px 0 21px; background: #fbfaf5; }
.vbar .track { flex: 141; }
.vbar .thumb { flex: 446; width: 18px; background: repeating-linear-gradient(#eef4fe 0 1px, #8cb0f8 1px 2px) center / 7px 8px no-repeat, linear-gradient(90deg, #cad8fc, #b9d0fb); }

.foot { height: 31px; display: flex; align-items: center; border-top: 1px solid #000; padding: 2px 0 0 205px; background: #1e4a7a; color: #e9eef6; font-size: 13px; line-height: 16px; }
.endl, .endr { width: 46px; height: 26px; }
.endl { margin-right: -2px; }
.wire { flex: 0 0 46px; height: 6px; border: solid #6685b4; border-width: 1px 0; opacity: .8; }
.narrow { font-size: 12px; }

.status { height: 27px; display: flex; align-items: center; justify-content: flex-end; background: linear-gradient(#d8d5c4, #ece9d8 4px); }
.cell { width: 24px; height: 22px; border-left: 1px solid #c5c2b0; }
.zone { width: 186px; display: flex; align-items: center; gap: 3px; padding-left: 3px; border-left: 1px solid #c5c2b0; height: 22px; }
.lock { width: 47px; height: 22px; display: flex; align-items: center; gap: 7px; padding-left: 8px; border-left: 1px solid #c5c2b0; }
.zoom { width: 107px; height: 22px; display: flex; align-items: center; gap: 4px; padding: 0 16px 0 11px; border-left: 1px solid #c5c2b0; }
.zoom span { flex: 1; }

.taskbar { height: 34px; display: flex; align-items: center; color: #fff; background: linear-gradient(#3b86ec, #2560dc 4px, #245edb 28px, #1a48b4); }
.start { width: 112px; height: 34px; display: flex; align-items: center; gap: 5px; padding-left: 10px; border: 0; border-radius: 0 10px 10px 0; background: linear-gradient(#2f7a30, #5ab25c 4px, #3a953c 10px, #3fa341 28px, #2c702c); font: italic 700 22px/26px "Open Sans", sans-serif; text-shadow: 1px 1px 2px #1a401a; }
.start svg { width: 25px; height: 25px; }
.tasks { flex: 1; min-width: 0; display: flex; gap: 2px; padding: 0 12px 0 10px; }
.task { flex: 1; min-width: 0; height: 28px; display: flex; align-items: center; gap: 4px; padding: 0 4px 0 9px; border: 0; border-radius: 3px; background: linear-gradient(#6aa2fa, #3c81f3 4px, #3a7cf0 24px, #2f6cdc); text-align: left; white-space: nowrap; }
.task span { flex: 1; }
.task .bigcaret { color: #fff; }
.task em { font-style: normal; color: #ffc870; }
.task.on { background: linear-gradient(#123c96, #1d50b8 4px, #1d50b8); }
.desk { display: flex; width: 265px; height: 24px; background: #fff; }
.desk input { flex: 1; min-width: 0; border: 0; padding-left: 5px; outline: 0; }
.desk button { width: 25px; border: 0; background: linear-gradient(#fdfdfd, #c9dcf5); display: grid; place-items: center; }
.q { margin: 0 10px 0 20px; }
.lang { width: 10px; height: 20px; }
.tray { width: 144px; height: 34px; margin-left: 8px; display: flex; align-items: center; gap: 2px; background: linear-gradient(90deg, #245edb 9px, transparent 9px), linear-gradient(#2fb0f5, #1290e8 5px, #149cf0 28px, #0d74c8); }
.tray time { margin-left: 14px; }
```
